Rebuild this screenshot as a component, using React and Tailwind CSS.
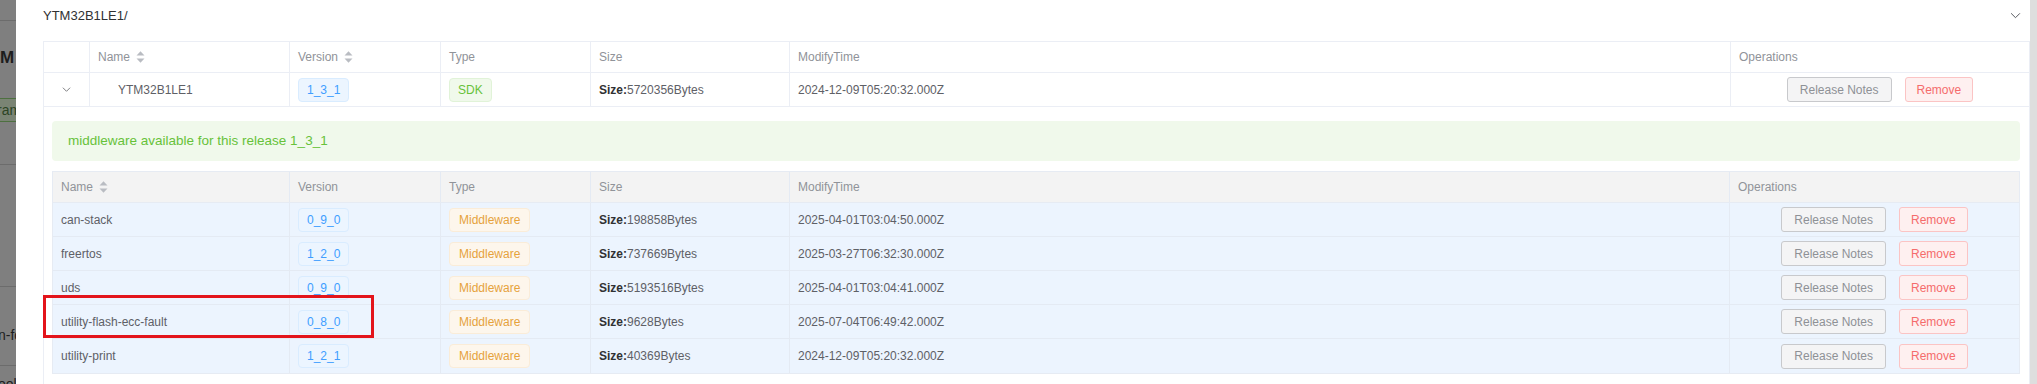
import React from "react";

const rows = [
  { name: "can-stack", ver: "0_9_0", size: "198858", time: "2025-04-01T03:04:50.000Z" },
  { name: "freertos", ver: "1_2_0", size: "737669", time: "2025-03-27T06:32:30.000Z" },
  { name: "uds", ver: "0_9_0", size: "5193516", time: "2025-04-01T03:04:41.000Z" },
  { name: "utility-flash-ecc-fault", ver: "0_8_0", size: "9628", time: "2025-07-04T06:49:42.000Z" },
  { name: "utility-print", ver: "1_2_1", size: "40369", time: "2024-12-09T05:20:32.000Z" },
];

function SortCaret() {
  return (
    <svg width="9" height="14" viewBox="0 0 9 14" className="ml-[6px] shrink-0">
      <path d="M0.5 5.6 L4.5 1.2 L8.5 5.6 Z" fill="#b9bcc2" />
      <path d="M0.5 8.4 L4.5 12.8 L8.5 8.4 Z" fill="#b9bcc2" />
    </svg>
  );
}

function Chevron({ w = 10, color = "#606266" }) {
  return (
    <svg width={w} height={w} viewBox="0 0 10 10" fill="none">
      <polyline points="1,3 5,7 9,3" stroke={color} strokeWidth="0.9" />
    </svg>
  );
}

function VerTag({ v }) {
  return (
    <span className="inline-flex h-6 items-center rounded-[4px] border border-[#d9ecff] bg-[#ecf5ff] px-2 text-[12px] text-[#409eff]">
      {v}
    </span>
  );
}

function TypeTag({ kind }) {
  if (kind === "SDK") {
    return (
      <span className="inline-flex h-6 items-center rounded-[4px] border border-[#e1f3d8] bg-[#f0f9eb] px-2 text-[12px] text-[#67c23a]">
        SDK
      </span>
    );
  }
  return (
    <span className="inline-flex h-6 items-center rounded-[4px] border border-[#faecd8] bg-[#fdf6ec] px-[9px] text-[12px] text-[#e6a23c]">
      Middleware
    </span>
  );
}

function Ops() {
  return (
    <div className="flex items-center justify-center gap-[13px]">
      <button className="h-[25px] rounded-[3px] border border-[#c8c9cc] bg-[#f4f4f5] px-3 text-[12px] text-[#8e9196]">
        Release Notes
      </button>
      <button className="h-[25px] rounded-[3px] border border-[#fbc4c4] bg-[#fef0f0] px-[11px] text-[12px] text-[#f56c6c]">
        Remove
      </button>
    </div>
  );
}

function SizeText({ s }) {
  return (
    <span className="text-[12px] text-[#5e6066]">
      <b className="font-bold text-[#303133]">Size:</b>
      {s}Bytes
    </span>
  );
}

const oc = "flex items-center border-r border-[#ebeef5] px-2";
const ic = "flex items-center border-r border-[#e4eaf3] px-2";

export default function App() {
  return (
    <div className="relative flex h-[384px] w-[2037px] overflow-hidden bg-white font-['Liberation_Sans',Arial,sans-serif]">
      {/* dimmed page behind the dialog */}
      <div className="flex w-[16px] shrink-0 flex-col overflow-hidden bg-[#7f7f7f] text-[#1d1d1d]">
        <div className="h-[21px] shrink-0 border-b border-[#6c6c6c]" />
        <div className="mt-[28px] h-[18px] shrink-0 whitespace-nowrap text-[17px] font-bold leading-[18px]">M</div>
        <div className="mt-[31px] flex h-[24px] shrink-0 items-center whitespace-nowrap border-y border-[#4d7040] bg-[#7a8474] text-[14px] text-[#2c4424]">
          <span className="-ml-[3px]">ram</span>
        </div>
        <div className="h-[43px] shrink-0 border-b border-[#6c6c6c]" />
        <div className="h-[122px] shrink-0 border-b border-[#6c6c6c]" />
        <div className="flex h-[79px] shrink-0 items-end whitespace-nowrap border-b border-[#6c6c6c] pb-[19px] text-[14px]">
          <span className="-ml-[2px]">n-fo</span>
        </div>
        <div className="mt-[8px] whitespace-nowrap text-[14px]">
          <span className="-ml-[2px]">ool</span>
        </div>
      </div>

      {/* dialog body */}
      <div className="flex min-w-0 flex-1 flex-col pl-[27px]">
        <div className="flex h-[31px] shrink-0 items-center justify-between pr-[9px]">
          <span className="text-[13px] text-[#303133]">YTM32B1LE1/</span>
          <Chevron w={11} color="#55585e" />
        </div>

        <div className="mt-[10px] border border-[#ebeef5]">
          {/* outer header */}
          <div className="grid h-[31px] grid-cols-[46px_200px_151px_150px_199px_1fr_298px] border-b border-[#ebeef5] text-[12px] text-[#909399]">
            <div className={oc} />
            <div className={oc}>
              Name
              <SortCaret />
            </div>
            <div className={oc}>
              Version
              <SortCaret />
            </div>
            <div className={oc}>Type</div>
            <div className={oc}>Size</div>
            <div className={oc}>ModifyTime</div>
            <div className="flex items-center px-2">Operations</div>
          </div>
          {/* outer row */}
          <div className="grid h-[34px] grid-cols-[46px_200px_151px_150px_199px_1fr_298px] border-b border-[#ebeef5] text-[12px] text-[#5e6066]">
            <div className={oc + " justify-center"}>
              <Chevron w={9} />
            </div>
            <div className={oc + " pl-[28px]"}>YTM32B1LE1</div>
            <div className={oc}>
              <VerTag v="1_3_1" />
            </div>
            <div className={oc}>
              <TypeTag kind="SDK" />
            </div>
            <div className={oc}>
              <SizeText s="5720356" />
            </div>
            <div className={oc}>2024-12-09T05:20:32.000Z</div>
            <div className="flex items-center justify-center px-2">
              <Ops />
            </div>
          </div>

          {/* expanded content */}
          <div className="pb-[14px] pl-2 pr-[9px] pt-[14px]">
            <div className="flex h-10 items-center rounded-[4px] bg-[#f0f9eb] px-4 text-[13.5px] text-[#67c23a]">
              middleware available for this release 1_3_1
            </div>

            <div className="mt-[10px] border border-[#e6ebf3]">
              <div className="grid h-[31px] grid-cols-[237px_151px_150px_199px_1fr_289px] border-b border-[#e6ebf3] bg-[#f3f3f3] text-[12px] text-[#909399]">
                <div className={ic}>
                  Name
                  <SortCaret />
                </div>
                <div className={ic}>Version</div>
                <div className={ic}>Type</div>
                <div className={ic}>Size</div>
                <div className={ic}>ModifyTime</div>
                <div className="flex items-center px-2">Operations</div>
              </div>
              {rows.map((r, i) => (
                <div
                  key={r.name}
                  className={
                    "grid h-[34px] grid-cols-[237px_151px_150px_199px_1fr_289px] bg-[#ecf4fe] text-[12px] text-[#5e6066] " +
                    (i < rows.length - 1 ? "border-b border-[#e4eaf3]" : "")
                  }
                >
                  <div className={ic}>{r.name}</div>
                  <div className={ic}>
                    <VerTag v={r.ver} />
                  </div>
                  <div className={ic}>
                    <TypeTag kind="Middleware" />
                  </div>
                  <div className={ic}>
                    <SizeText s={r.size} />
                  </div>
                  <div className={ic}>{r.time}</div>
                  <div className="flex items-center justify-center px-2">
                    <Ops />
                  </div>
                </div>
              ))}
            </div>
          </div>
        </div>
      </div>

      {/* scrollbar track */}
      <div className="w-[7px] shrink-0 bg-[#dedede]" />

      {/* red annotation box */}
      <div className="pointer-events-none absolute left-[43px] top-[295px] h-[43px] w-[331px] border-[3px] border-[#e3141b]" />
    </div>
  );
}
